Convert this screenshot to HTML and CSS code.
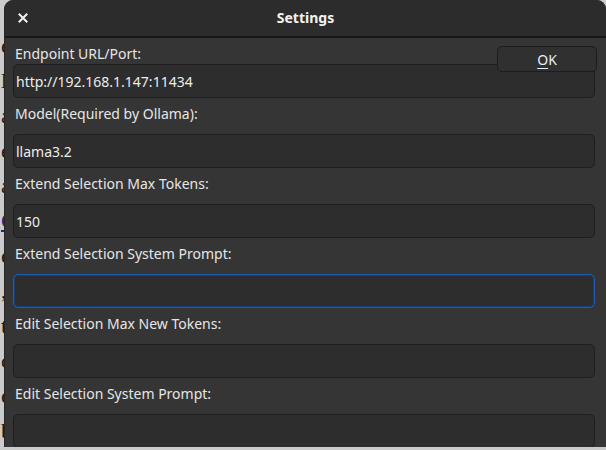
FILE: index.html
```html
<!DOCTYPE html>
<html>
<head>
    <link rel="stylesheet" href="styles.css">
</head>
<body>
    <div class="page">
        <p>eleven notes kept on the desk</p>
        <p>let the <a href="#">list</a> load</p>
        <p>and again</p>
        <p>each entry</p>
        <p>a draft</p>
        <p><a href="#">Chapter</a> two</p>
        <p>edit notes</p>
        <p>, then save</p>
        <p>to the end</p>
        <p>click here</p>
        <p>een more</p>
        <p>be done</p>
        <p>continue</p>
    </div>

    <div class="dialog">
        <div class="titlebar">
            <span class="close">
                <svg width="10" height="10" viewBox="0 0 10 10">
                    <path d="M1.5 1.5 L8.5 8.5 M8.5 1.5 L1.5 8.5" stroke="#f2f2f2" stroke-width="2" stroke-linecap="square"/>
                </svg>
            </span>
            <span class="title">Settings</span>
        </div>

        <div class="content">
            <button class="ok-btn"><u>O</u>K</button>

            <div class="field first">
                <label>Endpoint URL/Port:</label>
                <input type="text" value="http://192.168.1.147:11434">
            </div>
            <div class="field">
                <label>Model(Required by Ollama):</label>
                <input type="text" value="llama3.2">
            </div>
            <div class="field">
                <label>Extend Selection Max Tokens:</label>
                <input type="text" value="150">
            </div>
            <div class="field">
                <label>Extend Selection System Prompt:</label>
                <input type="text" class="focused" value="">
            </div>
            <div class="field">
                <label>Edit Selection Max New Tokens:</label>
                <input type="text" value="">
            </div>
            <div class="field">
                <label>Edit Selection System Prompt:</label>
                <input type="text" value="">
            </div>
        </div>
    </div>
</body>
</html>
```

FILE: styles.css
```css
* {
    margin: 0;
    padding: 0;
    box-sizing: border-box;
}

body {
    width: 606px;
    height: 450px;
    overflow: hidden;
    position: relative;
    background: #cbcbcb;
    font-family: 'Noto Sans', 'DejaVu Sans', sans-serif;
}

/* page behind the dialog, only its left edge shows */
.page {
    height: 446px;
    padding: 34px 0 0 1px;
    overflow: hidden;
    font-family: 'Liberation Serif', serif;
    font-size: 22px;
    line-height: 23px;
    color: #1c1c1c;
}

.page p {
    margin-bottom: 12px;
}

.page a {
    color: #1a2a8a;
}

.dialog {
    position: absolute;
    left: 4px;
    top: 0;
    width: 602px;
    height: 447px;
    background: #353535;
    border-left: 1px solid #262626;
    border-radius: 9px 9px 0 0;
    overflow: hidden;
}

.titlebar {
    height: 38px;
    background: #2c2c2c;
    border-bottom: 2px solid #161616;
    display: flex;
    align-items: center;
    justify-content: center;
    position: relative;
}

.titlebar .close {
    position: absolute;
    left: 13px;
    top: 13px;
    width: 10px;
    height: 10px;
    display: flex;
}

.titlebar .title {
    color: #f2f2f2;
    font-weight: bold;
    font-size: 14px;
    margin-top: -2px;
}

.content {
    position: relative;
    padding: 6px 11px 0 8px;
}

.ok-btn {
    position: absolute;
    top: 8px;
    right: 9px;
    width: 100px;
    height: 26px;
    background: #303030;
    border: 1px solid #1c1c1c;
    border-radius: 5px;
    color: #e8eef6;
    font-family: 'Noto Sans', sans-serif;
    font-size: 14px;
    z-index: 2;
}

.ok-btn u {
    text-decoration-thickness: 1px;
    text-underline-offset: 3px;
}

.field label {
    display: block;
    height: 20px;
    line-height: 20px;
    margin: 6px 0 10px 2px;
    color: #e6e6e6;
    font-size: 14px;
}

.field.first label {
    margin: 0 0 0 2px;
}

.field input {
    display: block;
    width: 582px;
    height: 34px;
    padding: 0 2px;
    background: #2d2d2d;
    border: 1px solid #1e1e1e;
    border-radius: 5px;
    color: #ececec;
    font-family: 'Noto Sans', sans-serif;
    font-size: 14px;
    outline: none;
}

.field input.focused {
    border: 1px solid #1d5cb3;
    box-shadow: inset 0 0 0 1px #143f7a;
}
```
